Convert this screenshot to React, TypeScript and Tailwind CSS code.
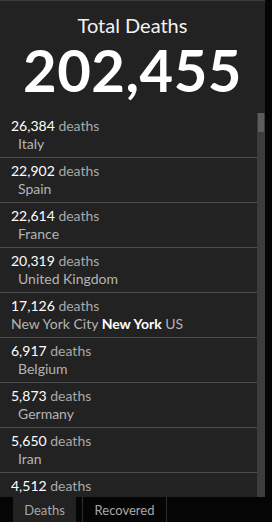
import React from 'react';

type Row = { count: string; place?: React.ReactNode; indent?: boolean };

const rows: Row[] = [
  { count: '26,384', place: 'Italy', indent: true },
  { count: '22,902', place: 'Spain', indent: true },
  { count: '22,614', place: 'France', indent: true },
  { count: '20,319', place: 'United Kingdom', indent: true },
  {
    count: '17,126',
    place: (
      <>
        New York City <span className="font-bold text-white">New York</span> US
      </>
    ),
  },
  { count: '6,917', place: 'Belgium', indent: true },
  { count: '5,873', place: 'Germany', indent: true },
  { count: '5,650', place: 'Iran', indent: true },
  // last row is cut off by the panel, only its first line shows
  { count: '4,512' },
];

const App: React.FC = () => {
  return (
    <div
      className="w-[272px] h-[522px] bg-[#050505] flex flex-col overflow-hidden"
      style={{ fontFamily: 'Lato, "Open Sans", sans-serif' }}
    >
      <div className="w-[265px] h-[497px] shrink-0 bg-[#222222] border-t border-[#3c3c3c] flex flex-col">
        {/* header */}
        <div className="h-[112px] shrink-0 flex flex-col items-center">
          <div className="mt-[12px] text-[20px] leading-[24px] text-[#f2f2f2]">Total Deaths</div>
          <div className="mt-[3px] text-[58px] leading-[60px] font-bold text-white tracking-[0.5px]">202,455</div>
        </div>

        {/* list + scrollbar */}
        <div className="flex-1 flex overflow-hidden">
          <div className="w-[257px] flex flex-col overflow-hidden">
            {rows.map((r) => (
              <div
                key={r.count}
                className="shrink-0 h-[45px] border-b border-[#4d4d4d] pl-[11px] pt-[4px] text-[14px] leading-[18px]"
              >
                <div>
                  <span className="text-white">{r.count}</span>{' '}
                  <span className="text-[#a9a9a9]">deaths</span>
                </div>
                {r.place && (
                  <div className={`text-[#b4b4b4] ${r.indent ? 'pl-[7px]' : ''}`}>{r.place}</div>
                )}
              </div>
            ))}
          </div>
          <div className="w-[8px] bg-[#3d3d3d] flex flex-col">
            <div className="h-[19px] bg-[#5c5c5c] mx-[1px]" />
          </div>
        </div>
      </div>

      {/* tabs */}
      <div className="flex h-[25px] shrink-0 text-[13px] leading-[16px] text-[#a8a8a8]">
        <div className="ml-[13px] w-[63px] bg-[#222222] flex items-center justify-center">Deaths</div>
        <div className="ml-[6px] w-[85px] border-l border-r border-[#2e2e2e] flex items-center justify-center">
          Recovered
        </div>
      </div>
    </div>
  );
};

export default App;
